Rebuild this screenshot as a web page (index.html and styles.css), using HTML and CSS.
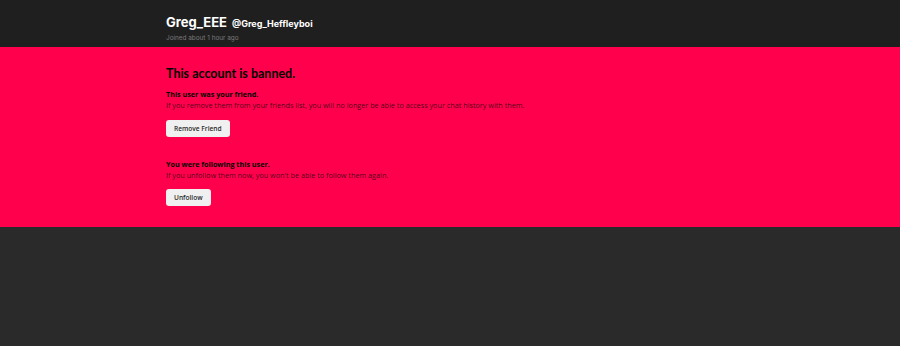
FILE: index.html
```html
<!DOCTYPE html>
<html>
<head>
<meta charset="utf-8">
<link rel="stylesheet" href="styles.css">
</head>
<body>
<header class="profile-header">
  <div class="container">
    <div class="names">
      <span class="display-name">Greg_EEE</span>
      <span class="username">@Greg_Heffleyboi</span>
    </div>
    <div class="joined">Joined about 1 hour ago</div>
  </div>
</header>
<section class="banned">
  <div class="container">
    <h1 class="banned-title">This account is banned.</h1>
    <div class="block">
      <div class="block-title">This user was your friend.</div>
      <div class="block-desc">If you remove them from your friends list, you will no longer be able to access your chat history with them.</div>
      <button class="btn">Remove Friend</button>
    </div>
    <div class="block">
      <div class="block-title">You were following this user.</div>
      <div class="block-desc">If you unfollow them now, you won't be able to follow them again.</div>
      <button class="btn">Unfollow</button>
    </div>
  </div>
</section>
</body>
</html>
```
FILE: styles.css
```css
html, body {
  margin: 0;
  padding: 0;
  background: #2a2a2a;
  font-family: "Open Sans", sans-serif;
}
.container {
  width: 568px;
  margin: 0 auto;
}
.profile-header {
  background: #1f1f1f;
  height: 47px;
  box-sizing: border-box;
  padding-top: 14px;
}
.names {
  display: flex;
  align-items: baseline;
  gap: 5px;
  line-height: 16px;
}
.display-name {
  font-family: Inter, sans-serif;
  font-weight: 700;
  font-size: 13px;
  color: #fff;
}
.username {
  font-family: Inter, sans-serif;
  font-weight: 700;
  font-size: 9px;
  color: #fff;
}
.joined {
  font-family: Inter, sans-serif;
  font-size: 6.4px;
  line-height: 8px;
  color: #7a7a7a;
  margin-top: 2px;
}
.banned {
  background: #ff004d;
  padding-top: 19px;
  height: 180px;
  box-sizing: border-box;
}
.banned-title {
  margin: 0 0 8px;
  font-family: Lato, sans-serif;
  font-weight: 700;
  font-size: 12.5px;
  line-height: 15px;
  color: #000;
}
.block + .block {
  margin-top: 22px;
}
.block-title {
  font-weight: 700;
  font-size: 7.2px;
  line-height: 11px;
  color: #000;
}
.block-desc {
  font-size: 7.25px;
  line-height: 11px;
  color: rgba(0, 0, 0, 0.72);
}
.btn {
  margin-top: 8.5px;
  display: block;
  border: none;
  border-radius: 3px;
  background: #f0f0f0;
  color: #2a2a2a;
  font-family: "Open Sans", sans-serif;
  font-weight: 600;
  font-size: 6.6px;
  height: 17px;
  padding: 0 8px;
}
```
